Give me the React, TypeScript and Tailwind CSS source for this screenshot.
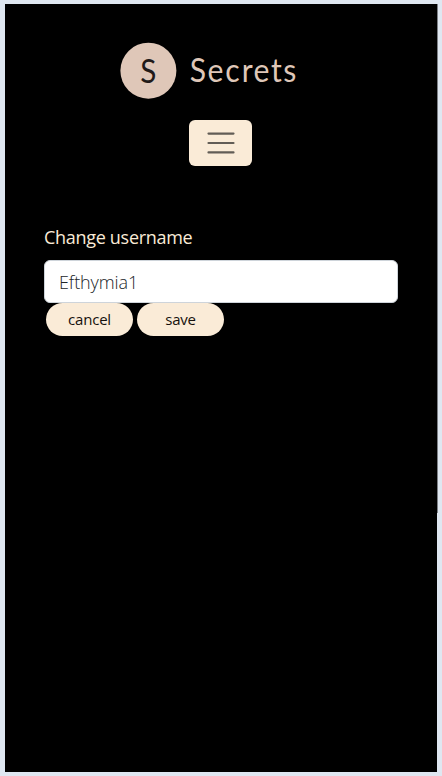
import React from "react";

const buttonClass =
  "flex h-[33px] w-[87px] items-center justify-center rounded-full bg-[#faebd7] pb-px text-[15px] tracking-[-0.2px] text-[#16110d]";

function Logo() {
  return (
    <div className="flex h-[57px] justify-center pr-[22px]">
      <svg width="180" height="57" viewBox="0 0 180 57" className="font-['Lato']">
        <circle cx="28.4" cy="28.7" r="28" fill="#dfc7b8" />
        <g transform="scale(0.9 1)">
          <text x="31.6" y="40.6" fontSize="33" textAnchor="middle" fill="#211a18">
            S
          </text>
          <text
            x="77.4 97.1 117 135.3 148.4 167.8 181.4"
            y="40.4"
            fontSize="33.5"
            fill="#dfc7b8"
          >
            Secrets
          </text>
        </g>
      </svg>
    </div>
  );
}

export default function App() {
  return (
    <div className="h-[776px] w-[442px] overflow-hidden bg-[#dfe7f1] py-1 pl-[5px] font-['Open_Sans','Noto_Sans',sans-serif]">
      <div className="flex h-[768px]">
        <main className="w-[432px] bg-black pt-[38px]">
          <Logo />
          <div className="mt-[21px] flex justify-center pr-px">
            <button aria-label="Menu" className="flex h-[46px] w-[63px] items-center justify-center rounded-[6px] bg-[#faebd7]">
              <svg width="30" height="30" viewBox="0 0 30 30" fill="none">
                <path d="M2.5 5.6h25M2.5 15h25M2.5 24.4h25" stroke="#625d56" strokeWidth="2.2" strokeLinecap="round" />
              </svg>
            </button>
          </div>
          <form className="mt-[58px] pl-[39px]">
            <label htmlFor="username" className="block h-9 text-[18px] leading-[27px] text-[#faebd7]">
              <span className="tracking-[-0.3px]">Change username</span>
            </label>
            <input
              id="username"
              defaultValue="Efthymia1"
              className="block h-[43px] w-[354px] rounded-[6px] border border-[#ced4da] bg-white px-[14px] text-[18px] font-light tracking-[-0.1px] text-[#212529] outline-none"
            />
            <div className="flex gap-1 pl-[2px]">
              <button type="button" className={buttonClass}>cancel</button>
              <button type="button" className={buttonClass}>save</button>
            </div>
          </form>
        </main>
        <div className="h-[509px] w-px bg-[#7d8086]" />
      </div>
    </div>
  );
}
